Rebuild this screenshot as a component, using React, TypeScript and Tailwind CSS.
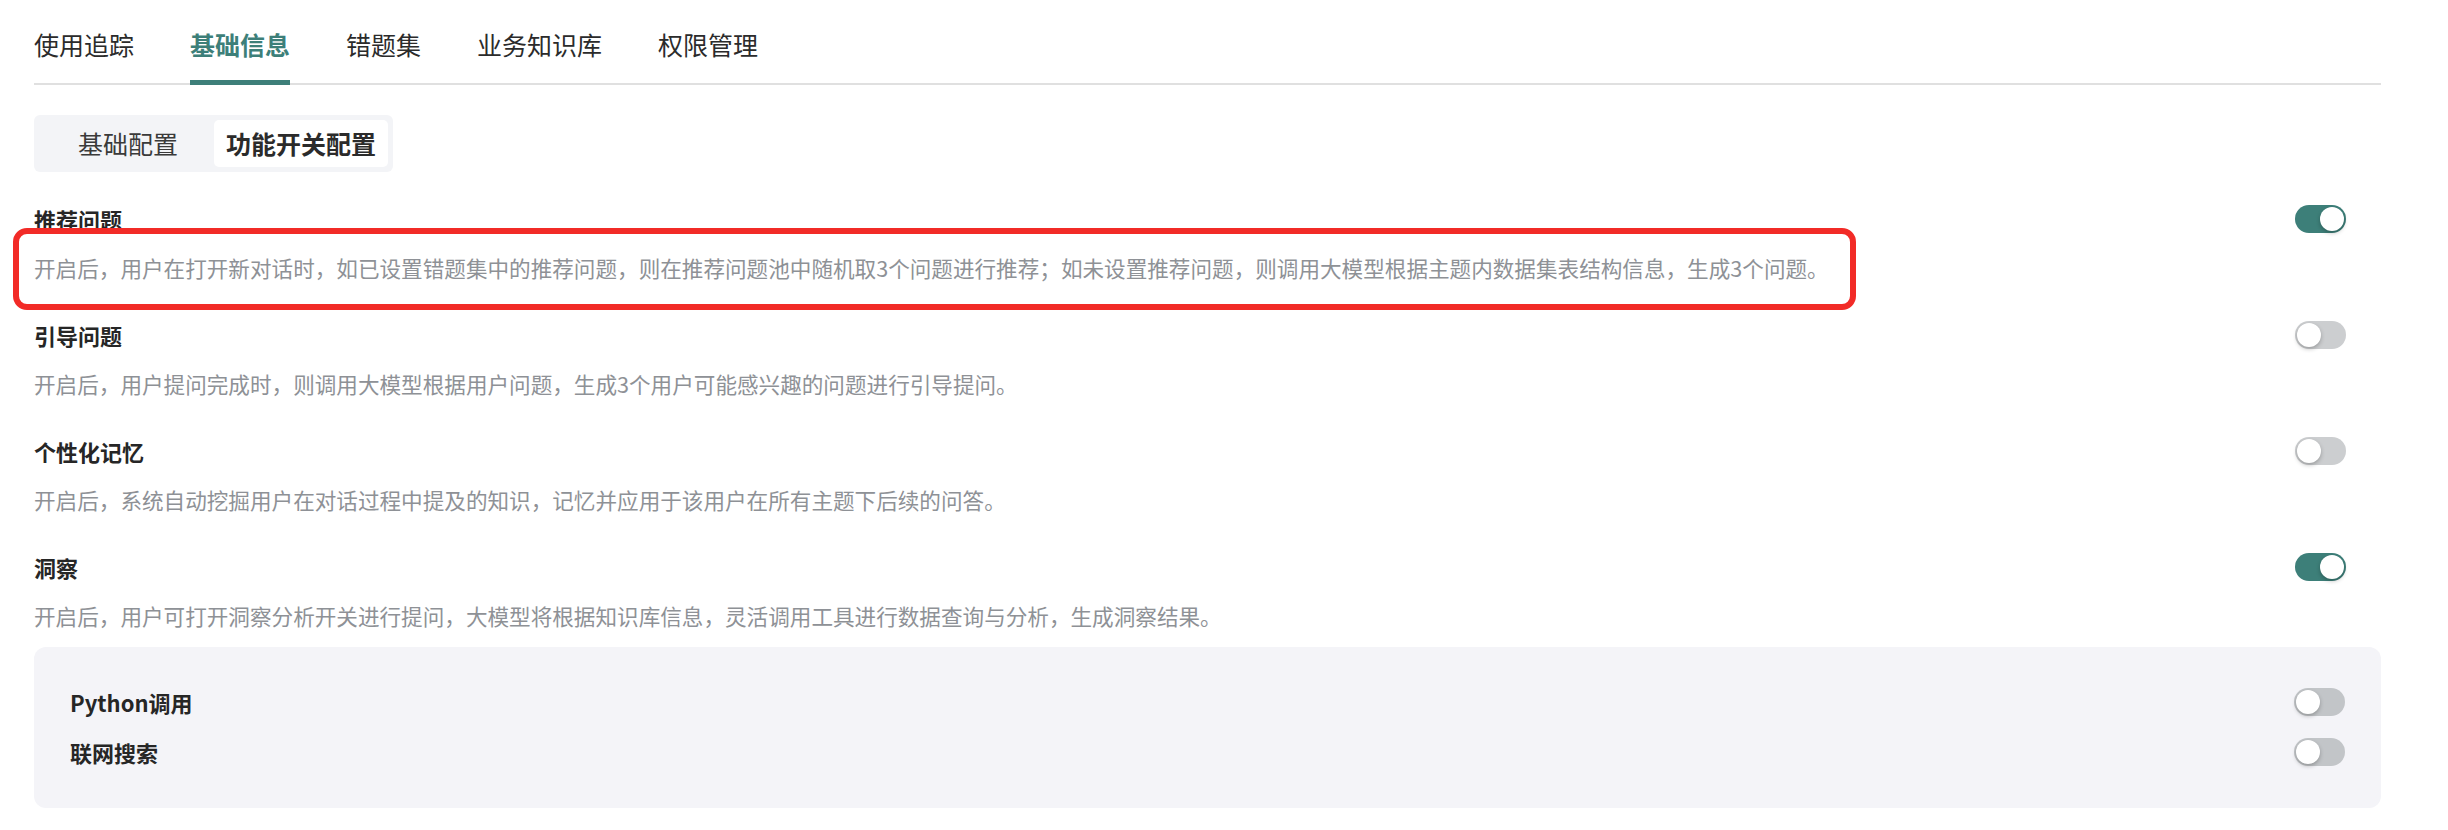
import { useState } from 'react';

const tabs = ['使用追踪', '基础信息', '错题集', '业务知识库', '权限管理'];

const features = [
  {
    id: 'recommend',
    title: '推荐问题',
    desc: '开启后，用户在打开新对话时，如已设置错题集中的推荐问题，则在推荐问题池中随机取3个问题进行推荐；如未设置推荐问题，则调用大模型根据主题内数据集表结构信息，生成3个问题。',
    on: true,
    marked: true,
  },
  {
    id: 'guide',
    title: '引导问题',
    desc: '开启后，用户提问完成时，则调用大模型根据用户问题，生成3个用户可能感兴趣的问题进行引导提问。',
    on: false,
  },
  {
    id: 'memory',
    title: '个性化记忆',
    desc: '开启后，系统自动挖掘用户在对话过程中提及的知识，记忆并应用于该用户在所有主题下后续的问答。',
    on: false,
  },
  {
    id: 'insight',
    title: '洞察',
    desc: '开启后，用户可打开洞察分析开关进行提问，大模型将根据知识库信息，灵活调用工具进行数据查询与分析，生成洞察结果。',
    on: true,
  },
];

function Toggle({ on, onClick, dark }: { on: boolean; onClick: () => void; dark?: boolean }) {
  return (
    <button
      onClick={onClick}
      className={`flex h-[28px] w-[51px] shrink-0 items-center rounded-full px-[2px] ${
        on ? 'justify-end bg-[#3d7f79]' : dark ? 'justify-start bg-[#c2c5c8]' : 'justify-start bg-[#ccced0]'
      }`}
    >
      <span className="h-[24px] w-[24px] rounded-full bg-white shadow-[0_2px_4px_rgba(0,0,0,0.25)]" />
    </button>
  );
}

export default function App() {
  const [activeTab] = useState('基础信息');
  const [sub, setSub] = useState('功能开关配置');
  const [state, setState] = useState<Record<string, boolean>>({
    recommend: true,
    guide: false,
    memory: false,
    insight: true,
    python: false,
    web: false,
  });
  const flip = (k: string) => setState((s) => ({ ...s, [k]: !s[k] }));

  return (
    <div className="min-h-screen bg-white font-['Noto_Sans_CJK_SC','Noto_Sans',sans-serif] text-[#262626]">
      <div className="pl-[34px] pr-[67px]">
        {/* Top tabs */}
        <nav className="flex gap-[56px] border-b-2 border-[#e0e0e0]">
          {tabs.map((t) => (
            <div key={t} className="-mb-[2px] flex flex-col">
              <span
                className={`pt-[27px] pb-[19px] text-[25px] leading-[34px] ${
                  t === activeTab ? 'font-bold text-[#3d7f79]' : 'text-[#2b2b2b]'
                }`}
              >
                {t}
              </span>
              <span className={`h-[5px] ${t === activeTab ? 'bg-[#3d7f79]' : ''}`} />
            </div>
          ))}
        </nav>

        {/* Sub tabs */}
        <div className="mt-[30px] flex w-fit rounded-[6px] bg-[#f3f4f7] p-[5px]">
          {['基础配置', '功能开关配置'].map((s) => (
            <button
              key={s}
              onClick={() => setSub(s)}
              className={`h-[47px] rounded-[5px] text-[25px] leading-[47px] ${
                s === sub ? 'bg-white px-[12px] font-bold text-[#2b2b2b]' : 'pl-[39px] pr-[36px] text-[#3a3a3a]'
              }`}
            >
              {s}
            </button>
          ))}
        </div>

        {/* Feature switches */}
        <div className="mt-[32px] flex flex-col gap-[37px]">
          {features.map((f) => (
            <div key={f.id}>
              <div className="flex h-[30px] items-center justify-between pr-[35px]">
                <span className="text-[22px] font-bold leading-[30px]">{f.title}</span>
                <Toggle on={state[f.id]} onClick={() => flip(f.id)} />
              </div>
              <div className="relative mt-[19px]">
                <p className="text-[21.6px] leading-[30px] text-[#8e9196]">{f.desc}</p>
                {f.marked && (
                  <div className="pointer-events-none absolute left-[-21px] top-[-25px] h-[82px] w-[1843px] rounded-[14px] border-[6px] border-[#f22b27]" />
                )}
              </div>
            </div>
          ))}
        </div>

        {/* Insight sub options */}
        <div className="mt-[16px] flex flex-col gap-[20px] rounded-[12px] bg-[#f4f4f8] pt-[40px] pb-[41px] pl-[36px] pr-[36px]">
          {[
            { id: 'python', label: 'Python调用' },
            { id: 'web', label: '联网搜索' },
          ].map((o) => (
            <div key={o.id} className="flex h-[30px] items-center justify-between">
              <span className="text-[22px] font-bold leading-[30px]">{o.label}</span>
              <Toggle on={state[o.id]} onClick={() => flip(o.id)} dark />
            </div>
          ))}
        </div>
      </div>
    </div>
  );
}
